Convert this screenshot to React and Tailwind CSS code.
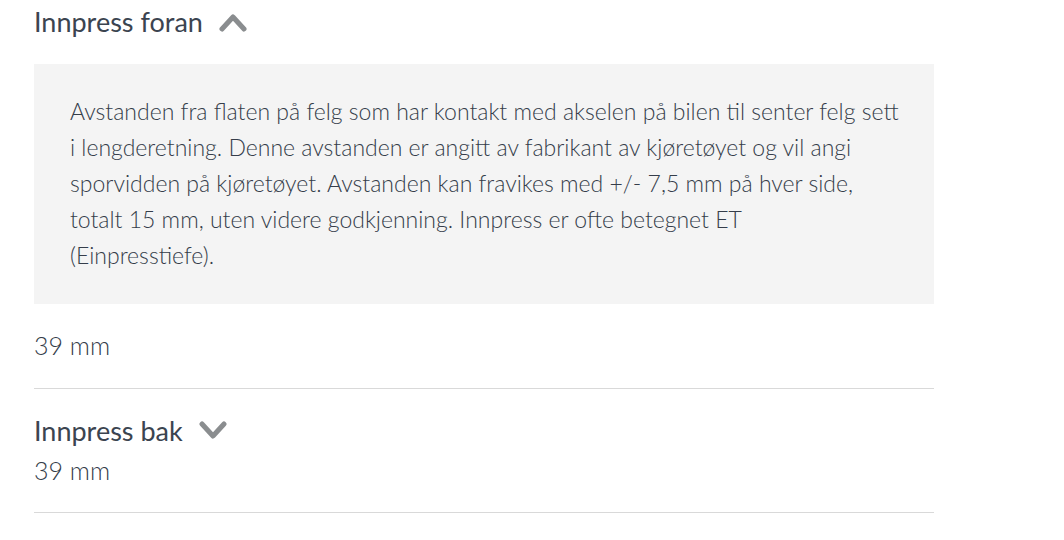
import React, { useState } from "react";

const Chevron = ({ up }) => (
  <svg
    width="30"
    height="20"
    viewBox="0 0 30 20"
    className="text-[#8a8d8f]"
    fill="none"
    stroke="currentColor"
    strokeWidth="5"
    strokeLinecap="round"
    strokeLinejoin="round"
  >
    {up ? <path d="M4 17 L15 5 L26 17" /> : <path d="M4 3 L15 15 L26 3" />}
  </svg>
);

const Info = () => (
  <>
    Avstanden fra flaten på felg som har kontakt med akselen på bilen til
    senter felg sett i lengderetning. Denne avstanden er angitt av fabrikant av
    kjøretøyet og vil angi sporvidden på kjøretøyet. Avstanden kan fravikes med
    +/- 7,5 mm på hver side, totalt 15 mm, uten videre godkjenning. Innpress er
    ofte betegnet ET
    <br />
    (Einpresstiefe).
  </>
);

const Row = ({ title, value, children, initialOpen }) => {
  const [open, setOpen] = useState(initialOpen);
  return (
    <div className="border-b border-[#d9d9d9]">
      <button
        onClick={() => setOpen(!open)}
        className="flex items-center gap-[15px] text-[27px] text-[#3b4450] leading-[44px] cursor-pointer"
      >
        <span>{title}</span>
        <Chevron up={open} />
      </button>
      {open && (
        <div className="mt-5 bg-[#f4f4f4] pl-9 pr-[32px] pt-[29px] pb-[31px] text-[23px] leading-[36px] text-[#353d4a] font-light">
          {children}
        </div>
      )}
      <div
        className={`text-[25px] text-[#353d4a] font-light ${
          open ? "pt-[23px] pb-[25px]" : "-mt-[1px] pb-[24px]"
        } leading-[36px]`}
      >
        {value}
      </div>
    </div>
  );
};

export default function App() {
  return (
    <div className="bg-white min-h-[540px] font-['Lato',sans-serif]">
      <div className="ml-[34px] w-[900px]">
        <Row title="Innpress foran" value="39 mm" initialOpen>
          <Info />
        </Row>
        <div className="pt-[20px]">
          <Row title="Innpress bak" value="39 mm" initialOpen={false} />
        </div>
      </div>
    </div>
  );
}
